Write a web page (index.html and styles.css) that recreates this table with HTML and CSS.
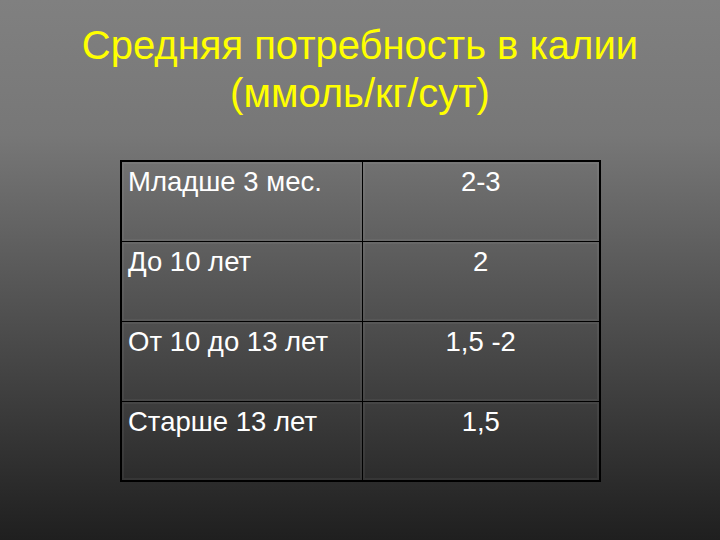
FILE: index.html
```html
<!DOCTYPE html>
<html lang="ru">
<head>
<meta charset="utf-8">
<title>Средняя потребность в калии</title>
<link rel="stylesheet" href="styles.css">
</head>
<body>
<div class="slide">
  <h1 class="title">Средняя потребность в калии<br>(ммоль/кг/сут)</h1>
  <table class="grid">
    <tr><td class="age">Младше 3 мес.</td><td class="val">2-3</td></tr>
    <tr><td class="age">До 10 лет</td><td class="val">2</td></tr>
    <tr><td class="age">От 10 до 13 лет</td><td class="val">1,5 -2</td></tr>
    <tr><td class="age">Старше 13 лет</td><td class="val">1,5</td></tr>
  </table>
</div>
</body>
</html>
```

FILE: styles.css
```css
html, body {
  margin: 0;
  padding: 0;
}
.slide {
  width: 720px;
  height: 540px;
  overflow: hidden;
  background: linear-gradient(180deg, #808080 0%, #777777 25%, #1f1f1f 100%);
  font-family: "Liberation Sans", Arial, sans-serif;
  padding-top: 21px;
  box-sizing: border-box;
}
.title {
  margin: 0;
  color: #ffff00;
  font-weight: normal;
  font-size: 40px;
  line-height: 48px;
  text-align: center;
}
.grid {
  margin: 43px 0 0 120px;
  width: 481px;
  border-collapse: collapse;
  border: 2px solid #000;
  table-layout: fixed;
}
.grid td {
  height: 80px;
  box-sizing: border-box;
  border: 1px solid #000;
  vertical-align: top;
  padding: 4px 6px;
  color: #ffffff;
  font-size: 27.5px;
  line-height: 32px;
  box-shadow: inset 0 0 0 2px rgba(255,255,255,0.05);
}
.grid .age {
  width: 241px;
  text-align: left;
}
.grid .val {
  text-align: center;
}
```
